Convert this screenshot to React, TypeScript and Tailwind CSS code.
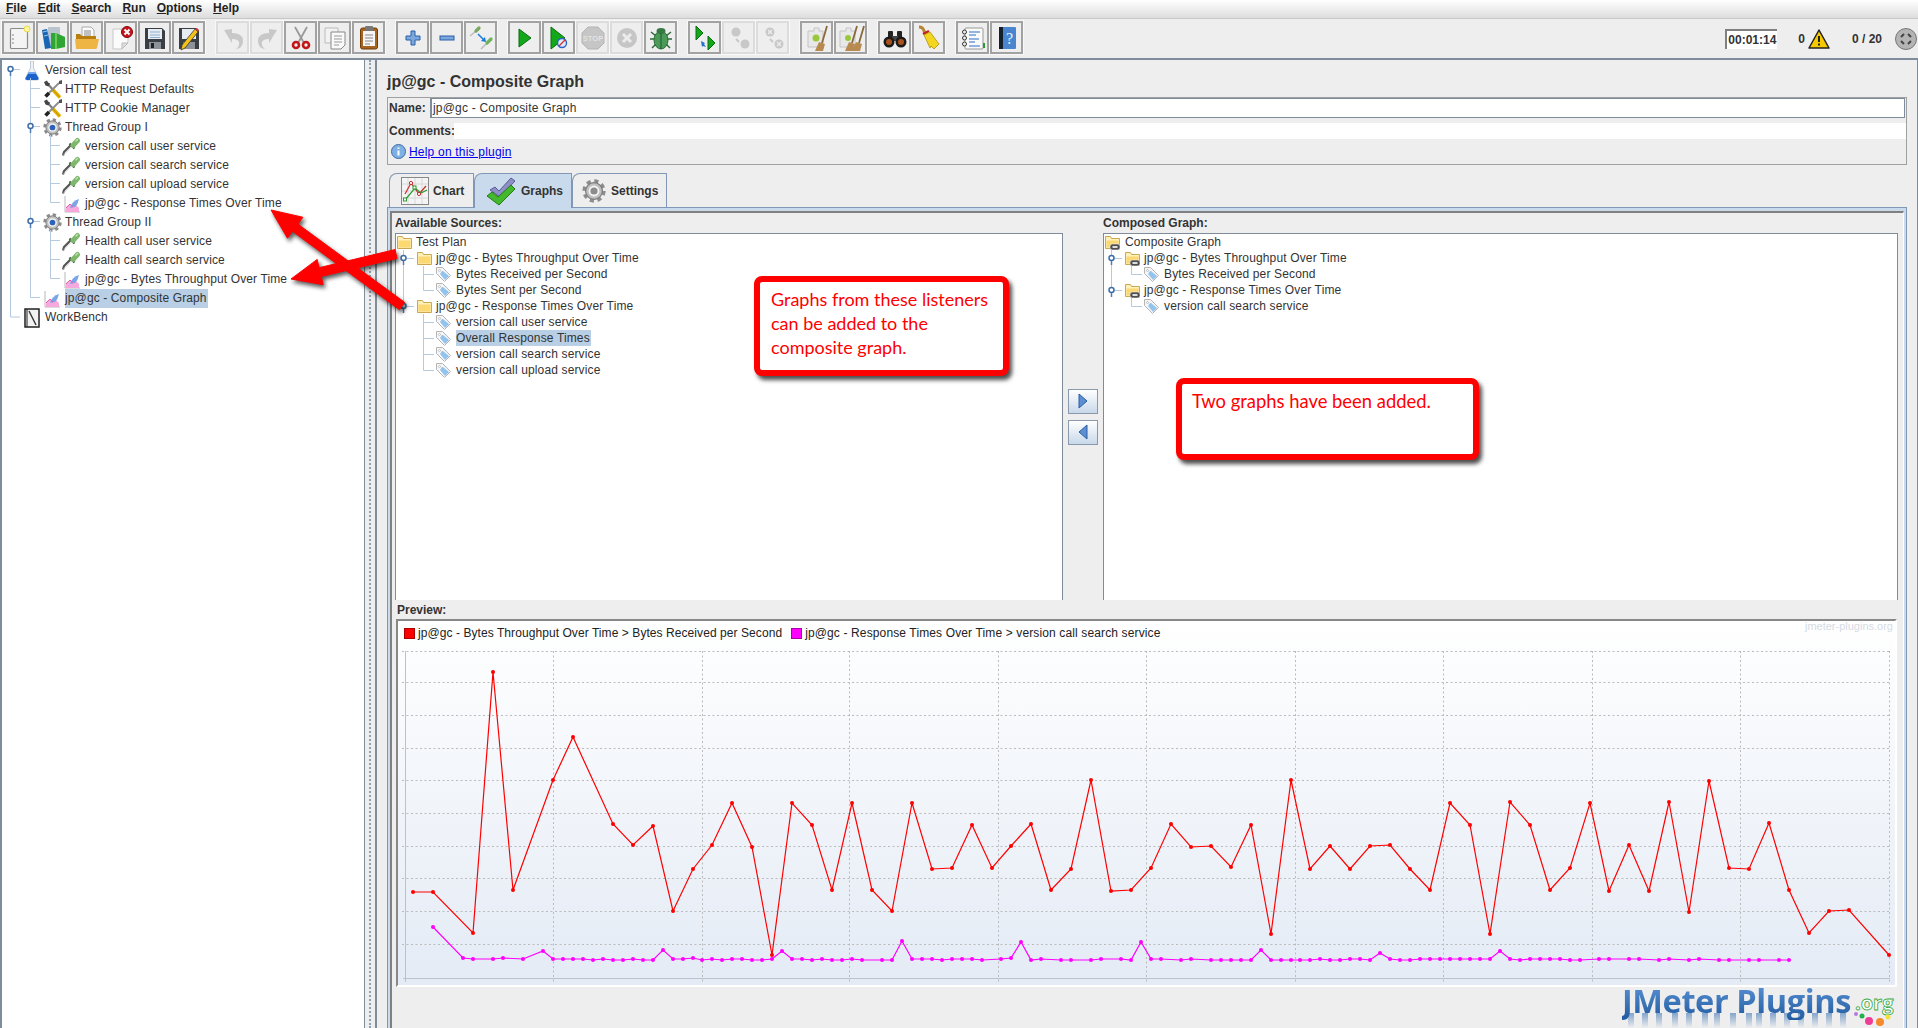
import type { ReactNode } from "react";

type Pt = [number, number];

const fromZoom = (pts: Pt[], ox: number, oy: number): Pt[] =>
  pts.map(([x, y]) => [ox + x / 3, oy + y / 3]);

const redLine: Pt[] = [
  ...fromZoom(
    [[69,876],[129,876],[249,999],[309,216],[369,870],[489,540],[549,411],[669,672],[729,735],[789,678],[849,933],[909,807],[966,735],[1026,609],[1086,741],[1146,1065],[1206,609],[1266,675],[1326,870],[1386,609],[1446,870]],
    390, 600),
  ...fromZoom(
    [[36,813],[96,489],[156,687],[216,684],[276,555],[336,684],[393,618],[453,552],[513,750],[573,687],[633,420],[693,753],[753,750],[813,684],[873,552],[933,621],[993,618],[1053,681],[1113,555],[1173,882],[1233,420],[1290,687],[1350,618],[1410,687],[1470,618],[1530,615]],
    880, 640),
  ...fromZoom(
    [[30,807],[90,870],[150,609],[210,675],[270,1002],[330,606],[390,675],[450,870],[510,804],[570,609],[627,873],[687,735],[747,873],[807,606],[867,936],[927,543],[987,804],[1047,807],[1107,669],[1167,870],[1227,999],[1287,933],[1347,930],[1467,1065]],
    1400, 600),
];

const pinkLine: Pt[] = [
  ...fromZoom(
    [[129,981],[219,1074],[249,1077],[309,1077],[339,1074],[399,1077],[459,1053],[489,1077],[519,1077],[549,1077],[579,1077],[609,1080],[639,1077],[669,1080],[699,1080],[729,1077],[759,1080],[789,1080],[819,1050],[849,1077],[879,1077],[909,1074],[936,1080],[966,1077],[996,1080],[1026,1077],[1056,1077],[1086,1080],[1116,1080],[1146,1077],[1176,1053],[1206,1077],[1236,1077],[1266,1080],[1296,1077],[1326,1080],[1356,1080],[1386,1077],[1416,1080],[1476,1080]],
    390, 600),
  ...fromZoom(
    [[36,960],[66,903],[96,957],[126,957],[156,957],[186,960],[216,957],[246,957],[276,957],[306,960],[363,957],[393,954],[423,906],[453,960],[483,957],[543,960],[573,960],[633,960],[663,957],[723,957],[753,960],[783,906],[813,957],[843,957],[903,960],[933,957],[993,960],[1023,960],[1053,960],[1083,960],[1113,960],[1143,930],[1173,960],[1203,960],[1233,960],[1260,960],[1290,960],[1320,957],[1350,960],[1380,960],[1410,957],[1440,957],[1470,960],[1500,939],[1530,957],[1560,960]],
    880, 640),
  ...fromZoom(
    [[30,1080],[60,1077],[90,1077],[120,1077],[150,1077],[180,1077],[210,1077],[240,1077],[270,1077],[300,1053],[330,1077],[360,1080],[390,1077],[420,1077],[450,1077],[480,1077],[510,1080],[540,1080],[597,1077],[627,1077],[687,1077],[717,1077],[777,1080],[807,1077],[867,1080],[897,1077],[957,1080],[987,1080],[1047,1080],[1077,1080],[1137,1080],[1167,1080]],
    1400, 600),
];

const gridY = [651, 682, 715, 748, 780, 813, 846, 878, 911, 944];
const gridX = [553, 702, 849, 998, 1146, 1295, 1443, 1592, 1740, 1889];

// letter stems of the logo, for its faded reflection
const logoStems = [6, 20, 34, 50, 64, 80, 92, 108, 124, 134, 148, 162, 176, 190, 204, 218];

const toPoints = (pts: Pt[]) => pts.map((p) => p.join(",")).join(" ");

// tree icons
const Flask = () => (
  <svg width="18" height="20" viewBox="0 0 18 20" className="shrink-0">
    <path d="M7.500 0h3v7l5 10q.5 2-1.500 2H4q-2 0-1.500-2l5-10z" fill="#eef2f7" stroke="#b4bfcc" strokeWidth="0.800" />
    <path d="M6 11h6l3.500 6q.5 2-1.500 2H4q-2 0-1.500-2z" fill="#1c62cc" />
    <path d="M6 11h6l1 2H5z" fill="#6fa4ea" />
  </svg>
);

const Tools = () => (
  <svg width="20" height="19" viewBox="0 0 20 19" className="shrink-0">
    <path d="M4 3l7 8" stroke="#7c7c7c" strokeWidth="2" />
    <path d="M10 10l7 7.500" stroke="#e8b400" strokeWidth="3.600" />
    <path d="M10 10l7 7.500" stroke="#8a6a00" strokeWidth="0.500" />
    <path d="M1 2l3-1.500 1 2 2 1-1.500 3-3-1z" fill="#444" />
    <path d="M16 3L3 16" stroke="#8e8e8e" strokeWidth="2" />
    <path d="M6 13l-3.500 3.500" stroke="#222" strokeWidth="3.600" />
    <path d="M19 0l-3 1v3h3z" fill="#555" />
  </svg>
);

const Gear = ({ size = 19, hub = "#2c62b8" }: { size?: number; hub?: string }) => (
  <svg width={size} height={size} viewBox="0 0 20 20" className="shrink-0">
    <circle cx="10" cy="10" r="8.200" fill="none" stroke="#8c8c8c" strokeWidth="3" strokeDasharray="3.400 3.040" />
    <circle cx="10" cy="10" r="7" fill="#c0c0c0" stroke="#7a7a7a" strokeWidth="1" />
    <circle cx="10" cy="10" r="4.500" fill="#f4f4f4" />
    <circle cx="10" cy="10" r="3" fill={hub} />
  </svg>
);

const Pipette = () => (
  <svg width="19" height="19" viewBox="0 0 19 19" className="shrink-0">
    <path d="M1 18.500l1-3.500 7-7" stroke="#555" strokeWidth="2.200" fill="none" />
    <path d="M1.500 18l7-7" stroke="#c4c4c4" strokeWidth="0.800" />
    <path d="M7.500 6.500l5 5" stroke="#3f5f3f" strokeWidth="2.200" />
    <path d="M11 8.500l4.500-5" stroke="#7fb86c" strokeWidth="5" strokeLinecap="round" />
    <path d="M14 4l1.500-1.500" stroke="#bfe3ae" strokeWidth="1.500" strokeLinecap="round" />
  </svg>
);

const Listener = () => (
  <svg width="17" height="18" viewBox="0 0 17 18" className="shrink-0">
    <path d="M1 1v16h15" fill="none" stroke="#b8b8b8" />
    <path d="M2 17v-5l4-3 3 3 3-2 3 3v4z" fill="#f7a8dc" />
    <path d="M6 13q2-7 9-9-1 5-4 8z" fill="#78a6e6" />
    <path d="M2 13l4-4 3 3" fill="none" stroke="#e060b0" />
  </svg>
);

const Notebook = () => (
  <svg width="18" height="20" viewBox="0 0 18 20" className="shrink-0">
    <rect x="2" y="1" width="14" height="18" fill="#f2f2f2" stroke="#222" strokeWidth="1.500" />
    <path d="M4 1v18" stroke="#222" />
    <path d="M6 3l7 14" stroke="#333" strokeWidth="1.400" />
  </svg>
);

const Folder = ({ linked }: { linked?: boolean }) => (
  <svg width="15" height="15" viewBox="0 0 15 15" className="shrink-0">
    <path d="M.5 1.500h5l1 2h8v10H.5z" fill="#fff0b8" stroke="#c8a850" />
    <path d="M1.500 5.500h12v7h-12z" fill="#fbd970" />
    {linked && <rect x="5" y="9" width="10" height="6" rx="2.500" fill="#4e4e4e" stroke="#eee" strokeWidth="0.600" />}
    {linked && <rect x="7.500" y="11" width="5" height="2" fill="#ddd" />}
  </svg>
);

const Tag = () => (
  <svg width="15" height="15" viewBox="0 0 15 15" className="shrink-0">
    <path d="M.5.500h6l8 8-6 6-8-8z" fill="#f6f6f6" stroke="#b4b4b4" />
    <path d="M6 4h1l6 5-4 4-5-6z" fill="#93c4ee" />
    <circle cx="3.500" cy="3.500" r="1" fill="#fff" stroke="#999" strokeWidth="0.500" />
  </svg>
);

// toolbar icons, all in the same 28 box
const Tb = ({ children }: { children: ReactNode }) => (
  <svg width="28" height="28" viewBox="0 0 28 28">
    {children}
  </svg>
);

const icons: Record<string, ReactNode> = {
  newFile: (
    <Tb>
      <rect x="5.500" y="4.500" width="17" height="20" rx="1" fill="#f4f4f4" stroke="#8a8a8a" strokeWidth="1.200" />
      <circle cx="8" cy="11" r="0.800" fill="#777" />
      <circle cx="8" cy="15" r="0.800" fill="#777" />
      <circle cx="8" cy="19" r="0.800" fill="#777" />
      <circle cx="22" cy="5" r="3" fill="#fdf6a0" stroke="#ead94a" />
    </Tb>
  ),
  templates: (
    <Tb>
      <rect x="9" y="3" width="12" height="20" rx="1" fill="#b9c4cf" />
      <path d="M3 6l5-1 4 19-6 1z" fill="#1766b4" />
      <path d="M4 8l4-1M5 12l4-1" stroke="#9cc5ee" />
      <path d="M12 9h5l9 4v10l-9 2h-5z" fill="#2fa533" />
      <path d="M17 9v16" stroke="#7ed66b" strokeWidth="1.500" />
    </Tb>
  ),
  open: (
    <Tb>
      <path d="M9 3h9l3 3v9H9z" fill="#fafafa" stroke="#aaa" />
      <path d="M11 7h7M11 9h7M11 11h7" stroke="#888" />
      <path d="M3 10h4l2 2h14v11q0 2-2 2H5q-2 0-2-2z" fill="#b87f10" />
      <path d="M2 15h24l-2 9q0 1-2 1H5q-2 0-2-1z" fill="#eeb544" />
    </Tb>
  ),
  close: (
    <Tb>
      <path d="M6 5h15v13l-6 7H6z" fill="#fbfbfb" stroke="#c8c8c8" />
      <path d="M15 25v-6h6z" fill="#ddd" stroke="#bbb" />
      <circle cx="20" cy="8" r="5.500" fill="#c8141c" stroke="#7c0a10" />
      <path d="M17.500 5.500l5 5m0-5l-5 5" stroke="#fff" strokeWidth="2" />
    </Tb>
  ),
  save: (
    <Tb>
      <path d="M4 4h17l3 3v18H4z" fill="#3a3f46" />
      <rect x="7" y="5" width="14" height="10" fill="#e6ecf2" />
      <path d="M9 8h10M9 11h10M9 13.500h10" stroke="#8fb0d0" />
      <rect x="8" y="18" width="12" height="7" fill="#8d9298" />
      <rect x="10" y="19" width="3" height="5" fill="#222" />
    </Tb>
  ),
  saveAs: (
    <Tb>
      <path d="M4 4h17l3 3v18H4z" fill="#3a3f46" />
      <rect x="7" y="5" width="14" height="10" fill="#e6ecf2" />
      <rect x="8" y="18" width="12" height="7" fill="#8d9298" />
      <path d="M6 26l1-5L20 5l3 3L10 24z" fill="#f2c21a" stroke="#333" strokeWidth="0.800" />
      <path d="M20 5l3 3 1-2-2-2z" fill="#d0342c" />
    </Tb>
  ),
  undo: (
    <Tb>
      <path d="M5 6l8-1v4q11 0 11 8 0 7-7 8 4-3 3-7-1-3-7-3v4z" fill="#c8c8c8" />
    </Tb>
  ),
  redo: (
    <Tb>
      <path d="M24 6l-8-1v4Q5 9 5 17q0 7 7 8-4-3-3-7 1-3 7-3v4z" fill="#c8c8c8" />
    </Tb>
  ),
  cut: (
    <Tb>
      <path d="M8 3l9 16M20 3l-9 16" stroke="#999" strokeWidth="1.800" />
      <circle cx="9" cy="21" r="3" fill="none" stroke="#c01818" strokeWidth="2.600" />
      <circle cx="19" cy="21" r="3" fill="none" stroke="#c01818" strokeWidth="2.600" />
    </Tb>
  ),
  copy: (
    <Tb>
      <path d="M4 4h13v15H4z" fill="#f2f2f2" stroke="#bbb" />
      <path d="M10 8h14v13l-4 4H10z" fill="#fafafa" stroke="#888" />
      <path d="M13 12h8M13 15h8M13 18h8M13 21h5" stroke="#999" />
    </Tb>
  ),
  paste: (
    <Tb>
      <rect x="5.500" y="4" width="17" height="21" rx="2" fill="#a8641c" stroke="#6e3f0c" />
      <rect x="8" y="7" width="12" height="15" fill="#f6f6f6" />
      <rect x="10" y="2" width="8" height="5" rx="1" fill="#777" />
      <path d="M10 11h8M10 14h8M10 17h8M10 20h5" stroke="#888" />
    </Tb>
  ),
  plus: (
    <Tb>
      <path d="M12 7h4v5h5v4h-5v5h-4v-5H7v-4h5z" fill="#7aa7dc" stroke="#2a5ea8" />
    </Tb>
  ),
  minus: (
    <Tb>
      <rect x="7" y="12" width="14" height="4" fill="#7aa7dc" stroke="#2a5ea8" />
    </Tb>
  ),
  toggle: (
    <Tb>
      <path d="M3 12l6-5" stroke="#bdbdbd" strokeWidth="1.600" />
      <path d="M9 7l3-3" stroke="#79a85f" strokeWidth="3.200" strokeLinecap="round" />
      <path d="M14 25l6-6" stroke="#bdbdbd" strokeWidth="1.600" />
      <path d="M20 19l4-4" stroke="#6fb35c" strokeWidth="3.200" strokeLinecap="round" />
      <path d="M11 10l6 6" stroke="#1b78dc" strokeWidth="1.500" />
      <path d="M19 18l-5-1 4-4z" fill="#1b78dc" />
    </Tb>
  ),
  play: (
    <Tb>
      <path d="M8 5l12 9-12 9z" fill="#12a81a" stroke="#0b6c12" />
    </Tb>
  ),
  playNoTimer: (
    <Tb>
      <path d="M6 3l14 11L6 25z" fill="#12a81a" stroke="#0b6c12" />
      <circle cx="17" cy="19" r="4.500" fill="#dfeaf8" stroke="#2a62c8" strokeWidth="1.400" />
      <path d="M14 22l6-6" stroke="#d23030" strokeWidth="1.300" />
    </Tb>
  ),
  stop: (
    <Tb>
      <path d="M9 3h10l6 6v10l-6 6H9l-6-6V9z" fill="#c6c6c6" stroke="#b4b4b4" />
      <text x="14" y="17" textAnchor="middle" fontSize="7.500" fontWeight="700" fill="#e2e2e2" fontFamily="'Liberation Sans', sans-serif">STOP</text>
    </Tb>
  ),
  shutdown: (
    <Tb>
      <circle cx="14" cy="14" r="10" fill="#c6c6c6" />
      <path d="M10 10l8 8m0-8l-8 8" stroke="#ececec" strokeWidth="3" />
    </Tb>
  ),
  bug: (
    <Tb>
      <path d="M4 8l5 4M24 8l-5 4M3 15h5M25 15h-5M5 24l4-4M23 24l-4-4" stroke="#2f6a38" strokeWidth="1.500" />
      <ellipse cx="14" cy="16" rx="7" ry="9" fill="#4c9a58" stroke="#2b6a36" />
      <ellipse cx="14" cy="7" rx="4.500" ry="3" fill="#357a42" />
      <path d="M14 9v16" stroke="#23592e" />
    </Tb>
  ),
  remoteStart: (
    <Tb>
      <path d="M5 2l7 7-7 7z" fill="#12a81a" stroke="#0b6c12" />
      <path d="M17 12l7 7-7 7z" fill="#12a81a" stroke="#0b6c12" />
      <path d="M10 17l4 2-1 1 2 3-3-1-1 1z" fill="#2a70c8" />
    </Tb>
  ),
  remoteStop: (
    <Tb>
      <circle cx="11" cy="8" r="4.500" fill="#c8c8c8" />
      <circle cx="20" cy="20" r="4.500" fill="#c8c8c8" />
      <path d="M11 15l3 3" stroke="#c8c8c8" strokeWidth="2" />
    </Tb>
  ),
  remoteShutdown: (
    <Tb>
      <circle cx="11" cy="8" r="4.500" fill="#c8c8c8" />
      <path d="M9 6l4 4m0-4l-4 4" stroke="#ececec" strokeWidth="1.400" />
      <circle cx="20" cy="20" r="4.500" fill="#c8c8c8" />
      <path d="M18 18l4 4m0-4l-4 4" stroke="#ececec" strokeWidth="1.400" />
      <path d="M11 15l3 3" stroke="#c8c8c8" strokeWidth="2" />
    </Tb>
  ),
  clear: (
    <Tb>
      <path d="M5 7h6v-3h5v3h4v16H5z" fill="#e8e8e8" stroke="#c4c4c4" />
      <circle cx="13" cy="14" r="3.500" fill="#9ac83c" />
      <path d="M24 2l-5 17" stroke="#8a6a3a" strokeWidth="1.800" />
      <path d="M16 18l6 2-2 7h-8z" fill="#b88a50" />
    </Tb>
  ),
  clearAll: (
    <Tb>
      <path d="M3 7h6v-3h5v3h4v16H3z" fill="#e8e8e8" stroke="#c4c4c4" />
      <circle cx="11" cy="14" r="3" fill="#9ac83c" />
      <path d="M20 2l-5 17M27 2l-5 17" stroke="#8a6a3a" strokeWidth="1.800" />
      <path d="M12 18l6 2-2 7H8z" fill="#b88a50" />
      <path d="M19 18l6 2-2 7h-8z" fill="#b88a50" />
    </Tb>
  ),
  search: (
    <Tb>
      <rect x="7" y="7" width="5" height="8" rx="1" fill="#222" />
      <rect x="16" y="7" width="5" height="8" rx="1" fill="#222" />
      <rect x="11" y="12" width="6" height="5" fill="#444" />
      <circle cx="8" cy="18" r="5.500" fill="#1a1a1a" />
      <circle cx="20" cy="18" r="5.500" fill="#1a1a1a" />
      <circle cx="8" cy="18" r="3" fill="#a8511c" />
      <circle cx="20" cy="18" r="3" fill="#a8511c" />
    </Tb>
  ),
  broom: (
    <Tb>
      <path d="M4 3q4 0 5 4l2 4" stroke="#b88430" strokeWidth="3" fill="none" />
      <path d="M8 10l6-3" stroke="#c82020" strokeWidth="2.400" />
      <path d="M9 11l6-3 9 12-5 5-3-3-1 2z" fill="#f4d520" stroke="#b09410" strokeWidth="0.800" />
    </Tb>
  ),
  functions: (
    <Tb>
      <rect x="6" y="4" width="18" height="21" rx="1" fill="#fafafa" stroke="#999" />
      <circle cx="5.500" cy="8" r="2" fill="#eee" stroke="#333" />
      <circle cx="5.500" cy="14" r="2" fill="#eee" stroke="#333" />
      <circle cx="5.500" cy="20" r="2" fill="#eee" stroke="#333" />
      <path d="M10 8h11M10 11h7M10 15h10M10 18h6M10 22h11" stroke="#2a6ecc" strokeWidth="1.200" />
      <rect x="24" y="19" width="2" height="5" fill="#2a9a3a" />
    </Tb>
  ),
  help: (
    <Tb>
      <rect x="7" y="3" width="16" height="22" rx="1" fill="#4a86d0" />
      <rect x="6" y="3" width="4" height="22" fill="#14202c" />
      <text x="16.500" y="20" textAnchor="middle" fontSize="16" fill="#e8f0fa" fontFamily="'Liberation Serif', serif">?</text>
    </Tb>
  ),
};

const toolbarGroups: { name: string; off?: boolean }[][] = [
  [{ name: "newFile" }, { name: "templates" }, { name: "open" }, { name: "close" }, { name: "save" }, { name: "saveAs" }],
  [{ name: "undo", off: true }, { name: "redo", off: true }, { name: "cut" }, { name: "copy" }, { name: "paste" }],
  [{ name: "plus" }, { name: "minus" }, { name: "toggle" }],
  [{ name: "play" }, { name: "playNoTimer" }, { name: "stop", off: true }, { name: "shutdown", off: true }, { name: "bug" }],
  [{ name: "remoteStart" }, { name: "remoteStop", off: true }, { name: "remoteShutdown", off: true }],
  [{ name: "clear" }, { name: "clearAll" }],
  [{ name: "search" }, { name: "broom" }],
  [{ name: "functions" }, { name: "help" }],
];

const ToolButton = ({ name, off }: { name: string; off?: boolean }) => (
  <div className={off
    ? "w-[33px] h-[33px] flex items-center justify-center border-2 border-[#dcdcdc] bg-[#eeeeee]"
    : "w-[33px] h-[33px] flex items-center justify-center border-2 border-[#a2a2a2] bg-[#eeeeee]"}>
    {icons[name]}
  </div>
);

const Menu = ({ first, rest }: { first: string; rest: string }) => (
  <span>
    <span className="underline">{first}</span>
    {rest}
  </span>
);

const TreeRow = ({ pad, gap, h, icon, label, selected, text }: {
  pad: string;
  gap: string;
  h: string;
  icon: ReactNode;
  label: string;
  selected?: boolean;
  text?: string;
}) => (
  <div className={`flex items-center whitespace-nowrap ${h} ${pad} ${gap}`}>
    <div className="flex items-center justify-center shrink-0">{icon}</div>
    <span className={selected ? `bg-[#b8cfe5] pr-[1px] ${text}` : text}>{label}</span>
  </div>
);

const Handle = ({ x, y }: { x: number; y: number }) => (
  <g>
    <path d={`M${x + 0.5} ${y}v7`} stroke="#4f7cb4" strokeWidth="1.500" />
    <circle cx={x + 0.5} cy={y} r="2.500" fill="#fff" stroke="#3e6ea8" strokeWidth="1.500" />
  </g>
);

const leftRows = [
  { pad: "pl-[21px]", gap: "gap-[4px]", icon: <Flask />, label: "Version call test" },
  { pad: "pl-[41px]", gap: "gap-[2px]", icon: <Tools />, label: "HTTP Request Defaults" },
  { pad: "pl-[41px]", gap: "gap-[2px]", icon: <Tools />, label: "HTTP Cookie Manager" },
  { pad: "pl-[41px]", gap: "gap-[3px]", icon: <Gear />, label: "Thread Group I" },
  { pad: "pl-[60px]", gap: "gap-[4px]", icon: <Pipette />, label: "version call user service" },
  { pad: "pl-[60px]", gap: "gap-[4px]", icon: <Pipette />, label: "version call search service" },
  { pad: "pl-[60px]", gap: "gap-[4px]", icon: <Pipette />, label: "version call upload service" },
  { pad: "pl-[62px]", gap: "gap-[4px]", icon: <Listener />, label: "jp@gc - Response Times Over Time" },
  { pad: "pl-[41px]", gap: "gap-[3px]", icon: <Gear />, label: "Thread Group II" },
  { pad: "pl-[60px]", gap: "gap-[4px]", icon: <Pipette />, label: "Health call user service" },
  { pad: "pl-[60px]", gap: "gap-[4px]", icon: <Pipette />, label: "Health call search service" },
  { pad: "pl-[62px]", gap: "gap-[4px]", icon: <Listener />, label: "jp@gc - Bytes Throughput Over Time" },
  { pad: "pl-[42px]", gap: "gap-[4px]", icon: <Listener />, label: "jp@gc - Composite Graph", selected: true },
  { pad: "pl-[21px]", gap: "gap-[4px]", icon: <Notebook />, label: "WorkBench" },
];

const rowText = "text-[12px] leading-[19px] tracking-[0.12px] text-[#333333]";
const smallRowText = "text-[12px] leading-[16px] tracking-[0.14px] text-[#333333]";

const LeftGuides = () => (
  <svg width="100" height="280" viewBox="2 60 100 280" className="absolute left-0 top-0 pointer-events-none" fill="none" stroke="#b5c9df">
    <path d="M10.500 70V317H20" />
    <path d="M30.500 78V297.500H40M30.500 88.500H40M30.500 107.500H40M30.500 126.500H40M30.500 221.500H40" />
    <path d="M50.500 135V202.500H60M50.500 145.500H60M50.500 164.500H60M50.500 183.500H60" />
    <path d="M50.500 230V278.500H60M50.500 240.500H60M50.500 259.500H60" />
    <path d="M10.500 69.500H20" />
    <Handle x={10} y={69} />
    <Handle x={30} y={126} />
    <Handle x={30} y={221} />
  </svg>
);

const SourceGuides = () => (
  <svg width="60" height="150" viewBox="396 234 60 150" className="absolute left-0 top-0 pointer-events-none" fill="none" stroke="#b5c9df">
    <path d="M403.500 250V306M403.500 258.500H414M403.500 306.500H414" />
    <path d="M423.500 266V290.500H434M423.500 274.500H434" />
    <path d="M423.500 314V370.500H434M423.500 322.500H434M423.500 338.500H434M423.500 354.500H434" />
    <Handle x={403} y={258} />
    <Handle x={403} y={306} />
  </svg>
);

const ComposedGuides = () => (
  <svg width="60" height="100" viewBox="1104 234 60 100" className="absolute left-0 top-0 pointer-events-none" fill="none" stroke="#b5c9df">
    <path d="M1111.500 250V290M1111.500 258.500H1122M1111.500 290.500H1122" />
    <path d="M1131.500 266V274.500H1142" />
    <path d="M1131.500 298V306.500H1142" />
    <Handle x={1111} y={258} />
    <Handle x={1111} y={290} />
  </svg>
);

const sourceRows = [
  { pad: "pl-[1px]", gap: "gap-[4px]", icon: <Folder />, label: "Test Plan" },
  { pad: "pl-[21px]", gap: "gap-[4px]", icon: <Folder />, label: "jp@gc - Bytes Throughput Over Time" },
  { pad: "pl-[40px]", gap: "gap-[5px]", icon: <Tag />, label: "Bytes Received per Second" },
  { pad: "pl-[40px]", gap: "gap-[5px]", icon: <Tag />, label: "Bytes Sent per Second" },
  { pad: "pl-[21px]", gap: "gap-[4px]", icon: <Folder />, label: "jp@gc - Response Times Over Time" },
  { pad: "pl-[40px]", gap: "gap-[5px]", icon: <Tag />, label: "version call user service" },
  { pad: "pl-[40px]", gap: "gap-[5px]", icon: <Tag />, label: "Overall Response Times", selected: true },
  { pad: "pl-[40px]", gap: "gap-[5px]", icon: <Tag />, label: "version call search service" },
  { pad: "pl-[40px]", gap: "gap-[5px]", icon: <Tag />, label: "version call upload service" },
];

const composedRows = [
  { pad: "pl-[1px]", gap: "gap-[5px]", icon: <Folder linked />, label: "Composite Graph" },
  { pad: "pl-[21px]", gap: "gap-[4px]", icon: <Folder linked />, label: "jp@gc - Bytes Throughput Over Time" },
  { pad: "pl-[40px]", gap: "gap-[5px]", icon: <Tag />, label: "Bytes Received per Second" },
  { pad: "pl-[21px]", gap: "gap-[4px]", icon: <Folder linked />, label: "jp@gc - Response Times Over Time" },
  { pad: "pl-[40px]", gap: "gap-[5px]", icon: <Tag />, label: "version call search service" },
];

const ChartTabIcon = () => (
  <svg width="28" height="28" viewBox="0 0 28 28" className="shrink-0">
    <rect x="0.500" y="0.500" width="27" height="27" fill="#f4f4f4" stroke="#888" />
    <path d="M7 1v26M14 1v26M21 1v26M1 7h26M1 14h26M1 21h26" stroke="#d8d8d8" />
    <path d="M4 17l6-11 8 11 7-8" fill="none" stroke="#c82c2c" strokeWidth="1.200" />
    <path d="M4 23l10-12 6 5 6-3" fill="none" stroke="#2f9a2f" strokeWidth="1.200" />
    <rect x="2.500" y="21" width="3" height="3" fill="#fff" stroke="#2f9a2f" />
    <rect x="12" y="9" width="3" height="3" fill="#fff" stroke="#2f9a2f" />
    <circle cx="10" cy="6" r="1.600" fill="#fff" stroke="#c82c2c" />
    <circle cx="18" cy="17" r="1.600" fill="#fff" stroke="#c82c2c" />
  </svg>
);

const CheckTabIcon = () => (
  <svg width="30" height="30" viewBox="0 0 30 30" className="shrink-0">
    <path d="M4 14l5-3 4 4L25 2l4 3-15 16z" fill="#8f8fc8" stroke="#5c5c96" />
    <path d="M1 20l5-4 6 5L25 9l4 4-16 16z" fill="#44b82c" stroke="#247a14" />
  </svg>
);

const ArrowButton = ({ left }: { left?: boolean }) => (
  <div className="w-[30px] h-[25px] flex items-center justify-center border border-[#8a9aab] bg-gradient-to-b from-white to-[#c8d8ea]">
    <svg width="10" height="16" viewBox="0 0 10 16">
      <path d={left ? "M9 1v14L1 8z" : "M1 1v14l8-7z"} fill="#5c8ed0" stroke="#2a5ea8" />
    </svg>
  </div>
);

// tip + tail -> red arrow polygon
const arrowShape = (tip: Pt, tail: Pt, headLen: number, headHalf: number, half: number) => {
  const dx = tail[0] - tip[0];
  const dy = tail[1] - tip[1];
  const len = Math.hypot(dx, dy);
  const ux = dx / len;
  const uy = dy / len;
  const nx = -uy;
  const ny = ux;
  const bx = tip[0] + ux * headLen;
  const by = tip[1] + uy * headLen;
  const pts: Pt[] = [
    tip,
    [bx + nx * headHalf, by + ny * headHalf],
    [bx + nx * half, by + ny * half],
    [tail[0] + nx * half, tail[1] + ny * half],
    [tail[0] - nx * half, tail[1] - ny * half],
    [bx - nx * half, by - ny * half],
    [bx - nx * headHalf, by - ny * headHalf],
  ];
  return toPoints(pts);
};

export default function App() {
  return (
    <div className="relative w-[1918px] h-[1028px] overflow-hidden flex flex-col bg-[#eeeeee] font-['Liberation_Sans',sans-serif] text-[#333333]">
      <div className="h-[19px] shrink-0 flex items-center gap-[11px] pl-[6px] pb-[3px] border-b border-[#c8c8c8] bg-gradient-to-b from-white to-[#dddddd] text-[12px] font-bold text-[#222222]">
        <Menu first="F" rest="ile" />
        <Menu first="E" rest="dit" />
        <Menu first="S" rest="earch" />
        <Menu first="R" rest="un" />
        <Menu first="O" rest="ptions" />
        <Menu first="H" rest="elp" />
      </div>

      <div className="h-[41px] shrink-0 flex border-b-2 border-[#7f8c9b] pl-[1px] bg-[#eeeeee]">
        <div className="flex items-start gap-[9px] pt-[1px]">
          {toolbarGroups.map((group, i) => (
            <div key={i} className="flex gap-[1px] p-[1px] bg-[#f8f8f8]">
              {group.map((b) => (
                <ToolButton key={b.name} name={b.name} off={b.off} />
              ))}
            </div>
          ))}
        </div>
        <div className="ml-auto flex items-center text-[12px] font-bold text-[#333333]">
          <div className="w-[52px] h-[20px] flex items-center pl-[1px] bg-white border-l-2 border-t-2 border-[#808080]">00:01:14</div>
          <span className="ml-[21px]">0</span>
          <svg width="22" height="20" viewBox="0 0 22 20" className="ml-[3px]">
            <path d="M11 1l10 18H1z" fill="#f6c800" stroke="#222" strokeWidth="1.500" strokeLinejoin="round" />
            <path d="M11 7v6M11 14.500v2" stroke="#222" strokeWidth="2" />
          </svg>
          <span className="ml-[22px]">0 / 20</span>
          <svg width="22" height="22" viewBox="0 0 22 22" className="ml-[13px] mr-[1px]">
            <circle cx="11" cy="11" r="10.500" fill="#b4b4b4" stroke="#777" />
            <path d="M6 9l3-3M13 6l3 3M16 13l-3 3M9 16l-3-3" stroke="#444" strokeWidth="2" />
          </svg>
        </div>
      </div>

      <div className="flex-1 min-h-0 flex">
        <div className="relative w-[365px] shrink-0 pt-[1px] bg-white border-l-2 border-r border-[#7f8c9b]">
          <LeftGuides />
          {leftRows.map((r) => (
            <TreeRow key={r.label} {...r} h="h-[19px]" text={rowText} />
          ))}
        </div>

        <div className="w-[10px] shrink-0 flex justify-center">
          <div className="w-[2px] h-full border-l-2 border-dotted border-[#8fa0b2]" />
        </div>

        <div className="flex-1 min-w-0 flex flex-col border-l-2 border-r border-[#7f8c9b] pl-[10px] pr-[10px]">
          <div className="h-[37px] shrink-0 pt-[12px] text-[16px] leading-[20px] font-bold text-[#333333]">jp@gc - Composite Graph</div>

          <div className="h-[68px] shrink-0 flex flex-col border border-[#a0a0a0]">
            <div className="h-[20px] flex items-center pl-[1px] text-[12px] font-bold">
              <span className="w-[41px] shrink-0">Name:</span>
              <div className="flex-1 h-[20px] flex items-center pl-[1px] mr-[1px] bg-white border border-[#7f8c9b] border-l-2 font-normal tracking-[0.2px]">jp@gc - Composite Graph</div>
            </div>
            <div className="h-[16px] mt-[5px] flex items-center pl-[1px] text-[12px] font-bold">
              <span className="w-[65px] shrink-0">Comments:</span>
              <div className="flex-1 h-full bg-white" />
            </div>
            <div className="flex-1 flex items-center gap-[3px] pl-[3px] text-[12px]">
              <svg width="15" height="15" viewBox="0 0 15 15">
                <circle cx="7.500" cy="7.500" r="7" fill="#7fb0e4" stroke="#3c6ca8" />
                <path d="M7.500 6.500v5M7.500 3.500v1.500" stroke="#fff" strokeWidth="2" />
              </svg>
              <span className="text-[#0000ee] underline tracking-[0.2px]">Help on this plugin</span>
            </div>
          </div>

          <div className="h-[42px] shrink-0 flex items-end pl-[2px]">
            <div className="w-[85px] h-[34px] flex items-center gap-[4px] pl-[11px] rounded-tl-[8px] border border-[#8297b5] border-b-0 text-[12px] font-bold">
              <ChartTabIcon />
              <span>Chart</span>
            </div>
            <div className="relative -mb-[1px] w-[98px] h-[35px] flex items-center gap-[5px] pl-[11px] rounded-tl-[8px] border border-[#8297b5] border-b-0 bg-[#c8daeb] text-[12px] font-bold">
              <CheckTabIcon />
              <span>Graphs</span>
            </div>
            <div className="w-[95px] h-[34px] flex items-center gap-[5px] pl-[9px] rounded-tl-[8px] border border-[#8297b5] border-b-0 text-[12px] font-bold">
              <Gear size={24} hub="#8c8c8c" />
              <span>Settings</span>
            </div>
          </div>

          <div className="flex-1 min-h-0 flex flex-col border border-b-0 border-[#8297b5] bg-[#c8daeb] pt-[3px] pl-[2px] pr-[2px]">
            <div className="flex-1 min-h-0 border-t-2 border-l-2 border-r border-[#808080] border-r-white bg-[#eeeeee] pl-[3px] pr-[4px]">
              <div className="grid grid-cols-[668px_40px_795px] h-[387px]">
                <div className="flex flex-col">
                  <div className="h-[20px] flex items-center pb-[1px] text-[12px] font-bold">Available Sources:</div>
                  <div className="relative flex-1 bg-white border border-b-0 border-[#7f8c9b]">
                    <SourceGuides />
                    {sourceRows.map((r) => (
                      <TreeRow key={r.label} {...r} h="h-[16px]" text={smallRowText} />
                    ))}
                  </div>
                </div>
                <div className="flex flex-col items-center justify-center gap-[6px] pt-[20px]">
                  <ArrowButton />
                  <ArrowButton left />
                </div>
                <div className="flex flex-col">
                  <div className="h-[20px] flex items-center pb-[1px] text-[12px] font-bold">Composed Graph:</div>
                  <div className="relative flex-1 bg-white border border-b-0 border-[#7f8c9b]">
                    <ComposedGuides />
                    {composedRows.map((r) => (
                      <TreeRow key={r.label} {...r} h="h-[16px]" text={smallRowText} />
                    ))}
                  </div>
                </div>
              </div>
              <div className="h-[19px] flex items-center pl-[2px] text-[12px] font-bold">Preview:</div>
              <div className="ml-[1px] w-[1501px] h-[368px] flex flex-col border-t-2 border-l-2 border-[#888888] border-r-2 border-b-2 border-r-white border-b-white bg-gradient-to-b from-white to-[#e4ebf5]">
                <div className="h-[24px] shrink-0 flex items-center gap-[3px] pl-[6px] text-[12px] tracking-[0.07px] text-[#222222]">
                  <span className="w-[11px] h-[11px] bg-[#ff0000] border border-[#aa0000]" />
                  <span>jp@gc - Bytes Throughput Over Time &gt; Bytes Received per Second</span>
                  <span className="ml-[6px] w-[11px] h-[11px] bg-[#ff00ff] border border-[#aa00aa]" />
                  <span className="tracking-[0.13px]">jp@gc - Response Times Over Time &gt; version call search service</span>
                  <span className="ml-auto self-start pr-[2px] text-[11px] leading-[12px] -mt-[1px] tracking-normal text-[#d5dbe3]">jmeter-plugins.org</span>
                </div>
                <svg width="1497" height="340" viewBox="398 645 1497 340" className="shrink-0">
                  <g stroke="#bbbbbb" strokeDasharray="2 2.500" fill="none">
                    {gridY.map((y) => (
                      <path key={y} d={`M402 ${y + 0.5}H1889`} />
                    ))}
                    {gridX.map((x) => (
                      <path key={x} d={`M${x + 0.5} 651V982`} />
                    ))}
                  </g>
                  <path d="M405.500 651V982M403 978.500H1890" stroke="#b8c2d0" fill="none" />
                  <polyline points={toPoints(redLine)} fill="none" stroke="#ff0000" strokeWidth="1.200" />
                  {redLine.map(([x, y], i) => (
                    <circle key={i} cx={x} cy={y} r="2" fill="#ff0000" />
                  ))}
                  <polyline points={toPoints(pinkLine)} fill="none" stroke="#ff00ff" strokeWidth="1.200" />
                  {pinkLine.map(([x, y], i) => (
                    <circle key={i} cx={x} cy={y} r="2" fill="#ff00ff" />
                  ))}
                </svg>
              </div>
            </div>
          </div>
        </div>
      </div>

      {/* annotations pasted over the screenshot */}
      <svg width="1918" height="1028" className="absolute left-0 top-0 pointer-events-none drop-shadow-[2px_3px_2px_rgba(0,0,0,0.65)]">
        <polygon points={arrowShape([271, 210], [402, 306], 30, 13, 4.5)} fill="#ff0000" stroke="#ff0000" strokeLinejoin="round" />
        <polygon points={arrowShape([291, 279], [396, 254], 30, 13, 4.5)} fill="#ff0000" stroke="#ff0000" strokeLinejoin="round" />
      </svg>

      <div className="absolute left-[754px] top-[276px] w-[255px] h-[100px] pl-[11px] pt-[5px] rounded-[8px] border-[6px] border-[#ff0000] bg-white shadow-[3px_4px_4px_rgba(0,0,0,0.7)] font-['Lato',sans-serif] text-[18px] leading-[24px] text-[#ff0000]">
        Graphs from these listeners<br />can be added to the<br />composite graph.
      </div>
      <div className="absolute left-[1176px] top-[378px] w-[303px] h-[82px] pl-[10px] pt-[5px] rounded-[8px] border-[6px] border-[#ff0000] bg-white shadow-[3px_4px_4px_rgba(0,0,0,0.7)] font-['Lato',sans-serif] text-[18.4px] leading-[24px] text-[#ff0000]">
        Two graphs have been added.
      </div>

      <div className="absolute left-[1622px] top-[982px] w-[290px] font-['Open_Sans',sans-serif] font-bold">
        <span className="block w-max text-[32.5px] leading-[38px] tracking-[-0.4px] bg-gradient-to-b from-[#5d95d8] to-[#1f5a9e] bg-clip-text text-transparent">JMeter Plugins</span>
        <svg width="230" height="15" viewBox="0 0 230 15" className="absolute left-0 top-[31px]">
          <defs>
            <linearGradient id="logoFade" x1="0" y1="0" x2="0" y2="1">
              <stop offset="0" stopColor="#2e6ab0" stopOpacity="0.55" />
              <stop offset="1" stopColor="#2e6ab0" stopOpacity="0" />
            </linearGradient>
          </defs>
          {logoStems.map((x) => (
            <rect key={x} x={x} y="0" width="6" height="15" fill="url(#logoFade)" />
          ))}
        </svg>
        <span className="absolute left-[233px] top-[9px] text-[20px] leading-[24px] text-white [-webkit-text-stroke:0.8px_#35a845]">.org</span>
        <svg width="60" height="16" viewBox="0 0 60 16" className="absolute left-[228px] top-[30px]">
          <circle cx="12" cy="4" r="2.500" fill="#22b14c" />
          <circle cx="19" cy="9" r="4" fill="#ee3d96" />
          <circle cx="30" cy="10" r="4" fill="#f58a2a" />
          <circle cx="38" cy="5" r="2.500" fill="#f3e13a" />
          <circle cx="6" cy="2" r="2" fill="#b878e0" />
        </svg>
      </div>
    </div>
  );
}
